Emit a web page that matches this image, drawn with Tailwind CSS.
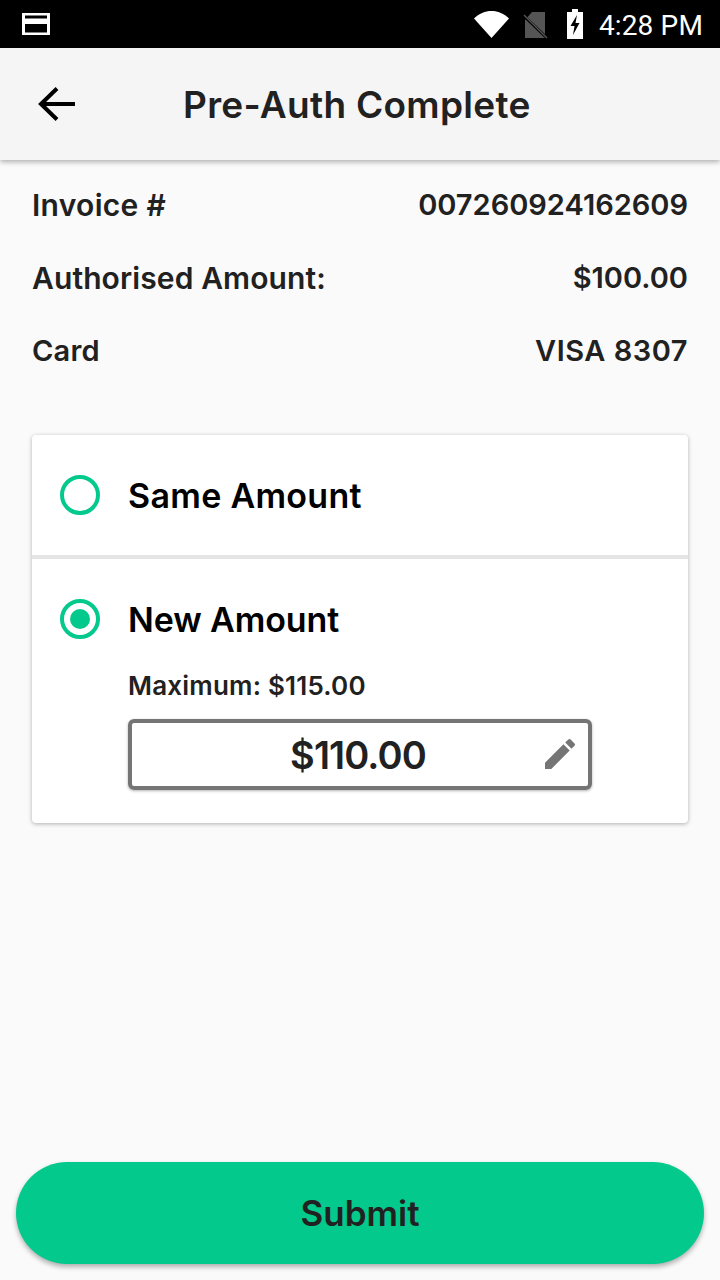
<!DOCTYPE html>
<html lang="en">
<head>
    <meta charset="UTF-8">
    <meta name="viewport" content="width=device-width, initial-scale=1.0">
    <title>Pre-Auth Complete</title>
    <script src="https://cdn.jsdelivr.net/npm/@tailwindcss/browser@4"></script>
</head>
<body class="bg-[#fafafa] font-['Inter',sans-serif] text-[#212121]">
    <div class="w-[720px] h-[1280px] flex flex-col overflow-hidden">
        <!-- status bar -->
        <div class="h-12 bg-black flex items-center justify-between pl-[22px] pr-[17px] shrink-0">
            <svg width="28" height="22" viewBox="0 0 28 22">
                <rect width="28" height="22" fill="#fff"/>
                <rect x="3" y="2.500" width="22" height="3" fill="#000"/>
                <rect x="3" y="11" width="22" height="8.500" fill="#000"/>
            </svg>
            <div class="flex items-center">
                <svg width="35" height="27" viewBox="0 0 35 27" class="mr-[13px]"><path d="M0 7.500C5 2.500 11 0 17.500 0S30 2.500 35 7.500L17.500 27z" fill="#fff"/></svg>
                <svg width="26" height="28" viewBox="0 0 26 28" class="mr-[19px] mt-[1px]">
                    <path d="M3 27V9l7-8h13v26z" fill="#555"/>
                    <path d="M0 3l26 25" stroke="#000" stroke-width="3"/>
                    <path d="M2 4l23 23" stroke="#555" stroke-width="1.500"/>
                </svg>
                <svg width="16" height="30" viewBox="0 0 16 30" class="mr-4">
                    <path d="M5 0h6v3h5v27H0V3h5z" fill="#fff"/>
                    <path d="M10 6L3.500 17h4l-1.500 9 6.500-12H8.500z" fill="#000"/>
                </svg>
                <span class="mt-[3px] text-[28px] leading-none font-['Roboto',sans-serif] tracking-[0.15px] text-white">4:28 PM</span>
            </div>
        </div>

        <!-- header -->
        <div class="relative h-28 bg-[#f5f5f5] flex items-center shadow-[0_2px_5px_rgba(0,0,0,0.3)] shrink-0">
            <svg width="40" height="40" viewBox="0 0 40 40" class="ml-[37px]">
                <path d="M38 20H5M20 4.500L4 20l16 15.500" fill="none" stroke="#000" stroke-width="4"/>
            </svg>
            <h1 class="ml-[106px] text-[37px] leading-none font-semibold tracking-[0.3px]">Pre-Auth Complete</h1>
        </div>

        <!-- details -->
        <div class="px-8 pt-[27px] flex flex-col gap-[37px] text-[29px] leading-9 font-semibold">
            <div class="flex justify-between"><span class="text-[30px] tracking-[0.3px]">Invoice #</span><span>007260924162609</span></div>
            <div class="flex justify-between"><span class="text-[30px] tracking-[0.1px]">Authorised Amount:</span><span>$100.00</span></div>
            <div class="flex justify-between"><span class="tracking-[0.2px]">Card</span><span class="tracking-[0.5px]">VISA 8307</span></div>
        </div>

        <!-- amount options -->
        <div class="mx-8 mt-[66px] h-[388px] bg-white rounded-[4px] shadow-[0_1px_4px_rgba(0,0,0,0.3)] flex flex-col text-black">
            <div class="h-[120px] flex items-center pl-7 border-b-4 border-[#e5e5e5] box-content">
                <span class="w-10 h-10 rounded-full border-4 border-[#04c98c]"></span>
                <span class="ml-7 pt-[2px] text-[34px] leading-none font-semibold tracking-[0.3px]">Same Amount</span>
            </div>
            <div class="pl-7 pt-10">
                <div class="flex items-center">
                    <span class="w-10 h-10 rounded-full border-4 border-[#04c98c] flex items-center justify-center"><span class="w-5 h-5 rounded-full bg-[#04c98c]"></span></span>
                    <span class="ml-7 pt-[2px] text-[34px] leading-none font-semibold tracking-[-0.1px]">New Amount</span>
                </div>
                <div class="ml-[68px] mt-[31px] text-[26px] leading-8 font-semibold tracking-[0.2px] text-[#212121]">Maximum: $115.00</div>
                <div class="relative ml-[68px] mt-[17px] w-[464px] h-[71px] border-4 border-[#757575] rounded-[6px] flex items-center justify-center shadow-[0_1px_3px_rgba(0,0,0,0.3)]">
                    <span class="mt-[1px] mr-1 text-[38px] leading-none font-semibold tracking-[-0.9px] text-[#212121]">$110.00</span>
                    <svg width="40" height="40" viewBox="0 0 24 24" class="absolute right-[8px] top-[11px]">
                        <path d="M3 17.250V21h3.750L17.810 9.940l-3.750-3.750L3 17.250zM20.710 7.040a1 1 0 0 0 0-1.410l-2.340-2.340a1 1 0 0 0-1.410 0l-1.830 1.830 3.750 3.750 1.830-1.830z" fill="#757575"/>
                    </svg>
                </div>
            </div>
        </div>

        <!-- submit -->
        <button class="mx-4 mt-auto mb-4 h-[102px] rounded-full bg-[#04c98c] text-[35px] leading-none font-semibold text-[#212121] shadow-[0_3px_5px_rgba(0,0,0,0.3)] shrink-0">Submit</button>
    </div>
</body>
</html>
